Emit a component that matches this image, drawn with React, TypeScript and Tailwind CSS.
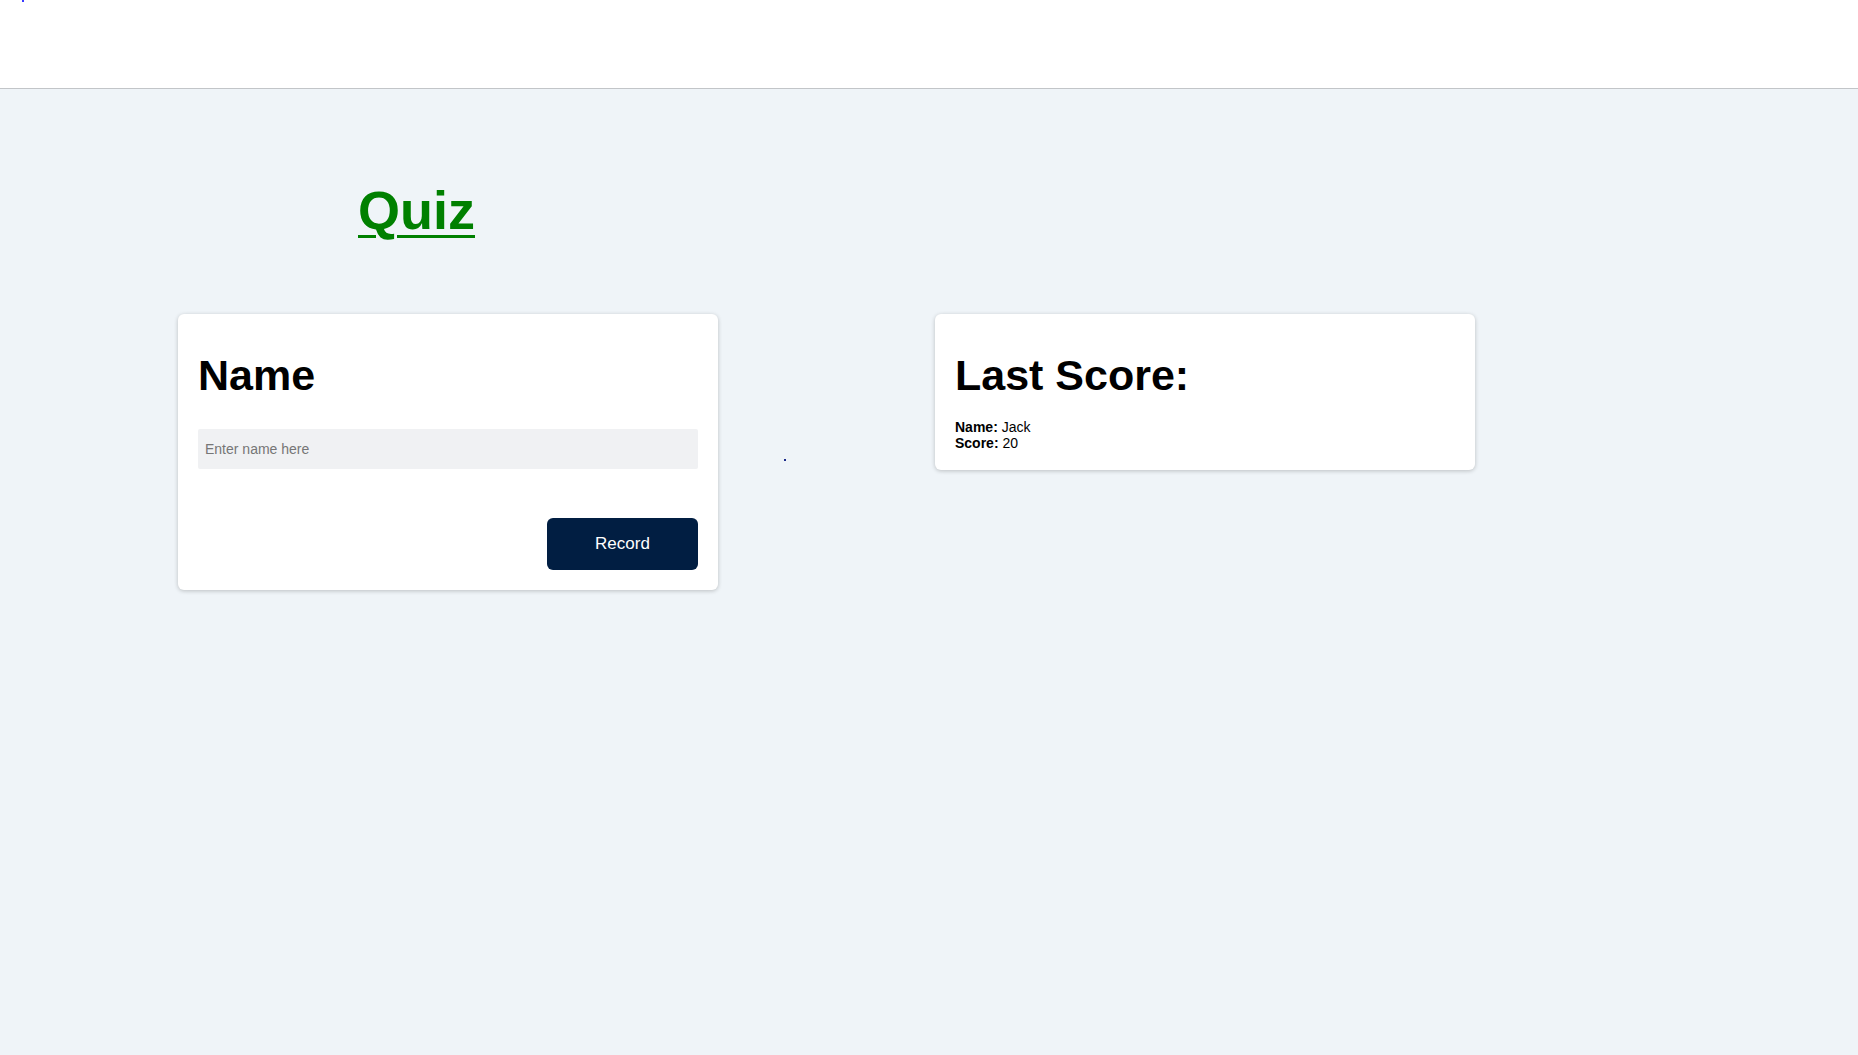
export default function App() {
  return (
    <div className="min-h-screen bg-[#eff4f8] font-['Liberation_Sans',Arial,sans-serif] text-black">
      {/* Header */}
      <header className="h-[89px] bg-white border-b border-[#c2c5c8]">
        <span className="block ml-[22px] w-[2px] h-[2px] bg-[#3a3aff]" />
      </header>

      {/* Title */}
      <h1 className="ml-[358px] mt-[91px] text-[54px] font-bold leading-[61px] text-[#008000] underline decoration-[3px] underline-offset-[6px]">
        Quiz
      </h1>

      {/* Cards */}
      <div className="flex items-start mt-[73px] pl-[178px]">
        <div className="w-[540px] bg-white rounded-md shadow-[0_1px_4px_rgba(0,0,0,0.22)] px-5 pt-5 pb-5">
          <h2 className="mt-[17px] text-[43px] font-bold leading-[48px]">Name</h2>
          <input
            type="text"
            placeholder="Enter name here"
            className="mt-[30px] block w-full h-10 bg-[#f0f1f3] rounded-[2px] px-[7px] text-[14px] placeholder:text-[#767676] outline-none"
          />
          <div className="flex justify-end mt-[49px]">
            <button className="w-[151px] h-[52px] rounded-md bg-[#011e42] text-white text-[17px]">
              Record
            </button>
          </div>
        </div>

        <div className="w-[217px] pl-[66px] pt-[145px]">
          <span className="block w-[2px] h-[2px] bg-[#1a2a8a]" />
        </div>

        <div className="w-[540px] bg-white rounded-md shadow-[0_1px_4px_rgba(0,0,0,0.22)] px-5 pt-5 pb-[19px]">
          <h2 className="mt-[17px] text-[43px] font-bold leading-[48px]">Last Score:</h2>
          <div className="mt-5 text-[14px] leading-4">
            <p>
              <span className="font-bold">Name:</span> Jack
            </p>
            <p>
              <span className="font-bold">Score:</span> 20
            </p>
          </div>
        </div>
      </div>
    </div>
  );
}
